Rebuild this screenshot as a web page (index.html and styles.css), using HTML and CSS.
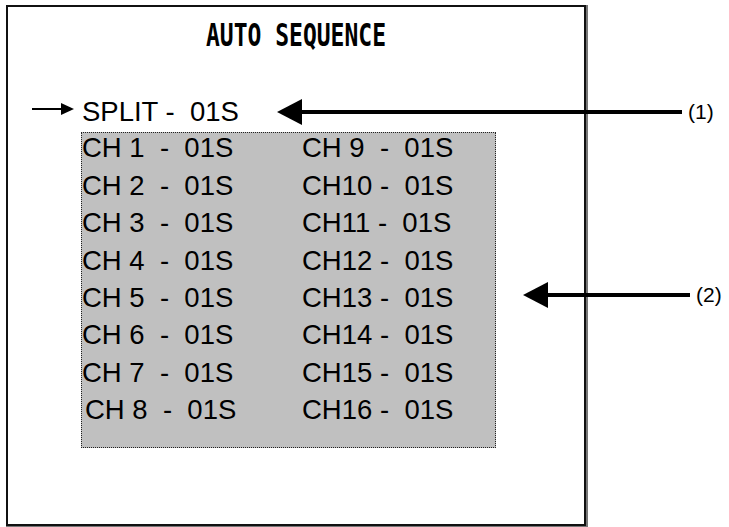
FILE: index.html
```html
<!DOCTYPE html>
<html lang="en">
<head>
  <meta charset="UTF-8" />
  <title>Auto Sequence</title>
  <link rel="stylesheet" href="styles.css">
</head>
<body>

  <div class="page">
    <div class="screen">
      <h1 class="title">AUTO SEQUENCE</h1>

      <div class="split-row">
        <svg class="pointer" width="42" height="12" viewBox="0 0 42 12">
          <line x1="0" y1="6" x2="31" y2="6" stroke="#000" stroke-width="2"/>
          <polygon points="29,0 42,6 29,12" fill="#000"/>
        </svg>
        <span class="item">SPLIT -  01S</span>
      </div>

      <div class="channels">
        <div class="grid">
          <span class="item">CH 1  -  01S</span>
          <span class="item">CH 2  -  01S</span>
          <span class="item">CH 3  -  01S</span>
          <span class="item">CH 4  -  01S</span>
          <span class="item">CH 5  -  01S</span>
          <span class="item">CH 6  -  01S</span>
          <span class="item">CH 7  -  01S</span>
          <span class="item nudge">CH 8  -  01S</span>
          <span class="item">CH 9  -  01S</span>
          <span class="item">CH10 -  01S</span>
          <span class="item">CH11 -  01S</span>
          <span class="item">CH12 -  01S</span>
          <span class="item">CH13 -  01S</span>
          <span class="item">CH14 -  01S</span>
          <span class="item">CH15 -  01S</span>
          <span class="item">CH16 -  01S</span>
        </div>
      </div>
    </div>

    <!-- callouts drawn over the screen -->
    <div class="callout callout-1">
      <svg width="405" height="26" viewBox="0 0 405 26">
        <polygon points="0,13 25,0 25,26" fill="#000"/>
        <line x1="22" y1="13" x2="405" y2="13" stroke="#000" stroke-width="4"/>
      </svg>
      <span class="label">(1)</span>
    </div>

    <div class="callout callout-2">
      <svg width="167" height="26" viewBox="0 0 167 26">
        <polygon points="0,13 25,0 25,26" fill="#000"/>
        <line x1="22" y1="13" x2="167" y2="13" stroke="#000" stroke-width="4"/>
      </svg>
      <span class="label">(2)</span>
    </div>
  </div>

</body>
</html>
```

FILE: styles.css
```css
* {
  box-sizing: border-box;
}

body {
  margin: 0;
  background: #fff;
  color: #000;
  font-family: 'Liberation Sans', Arial, sans-serif;
}

.page {
  position: relative;
  width: 729px;
  height: 527px;
  padding: 5px 0 0 6px;
}

.screen {
  width: 580px;
  height: 521px;
  border: 2px solid #111;
  box-shadow: 1px 1px 0 1px #777;
  background: #fff;
}

.title {
  margin: 13px 0 0;
  text-align: center;
  font-family: 'DejaVu Sans Mono', 'Liberation Mono', monospace;
  font-weight: bold;
  font-size: 23px;
  line-height: 30px;
  transform: scaleY(1.35);
}

.item {
  font-size: 27.5px;
  line-height: 37.4px;
  white-space: pre;
}

.split-row {
  display: flex;
  align-items: center;
  gap: 8px;
  margin-top: 43px;
  padding-left: 24px;
}

.pointer {
  margin-bottom: 6px;
}

.channels {
  width: 415px;
  height: 316px;
  margin: 2px 0 0 73px;
  background: #c0c0c0;
  border: 1px dotted #222;
}

.grid {
  display: grid;
  grid-template-columns: 220px 1fr;
  grid-template-rows: repeat(8, 37.4px);
  grid-auto-flow: column;
  margin-top: -4px;
}

.nudge {
  padding-left: 3px;
}

.callout {
  position: absolute;
  display: flex;
  align-items: center;
  gap: 6px;
}

.callout-1 {
  left: 277px;
  top: 99px;
}

.callout-2 {
  left: 523px;
  top: 282px;
}

.label {
  font-size: 21px;
  line-height: 26px;
}
```
